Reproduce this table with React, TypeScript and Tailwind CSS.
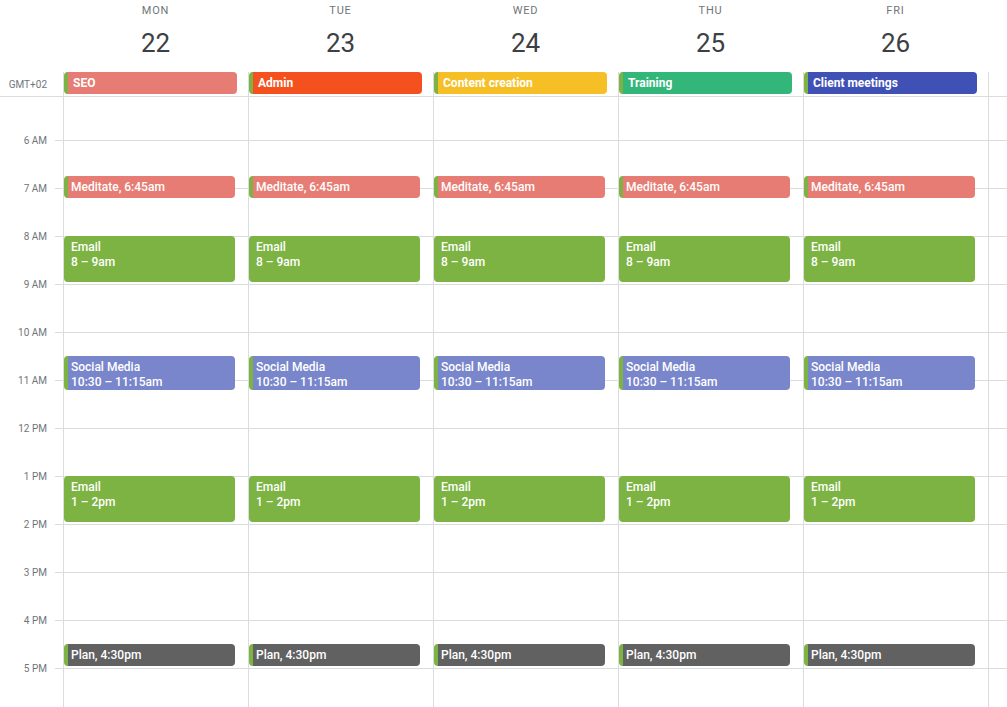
const days = [
  { name: 'MON', date: 22, allDay: 'SEO', color: 'bg-[#e67c73]' },
  { name: 'TUE', date: 23, allDay: 'Admin', color: 'bg-[#f4511e]' },
  { name: 'WED', date: 24, allDay: 'Content creation', color: 'bg-[#f6bf26]' },
  { name: 'THU', date: 25, allDay: 'Training', color: 'bg-[#33b679]' },
  { name: 'FRI', date: 26, allDay: 'Client meetings', color: 'bg-[#3f51b5]' },
];

const hours = ['6 AM', '7 AM', '8 AM', '9 AM', '10 AM', '11 AM', '12 PM', '1 PM', '2 PM', '3 PM', '4 PM', '5 PM'];

type CalEvent = { title: string; time?: string; start: number; dur: number; color: string };

const events: CalEvent[] = [
  { title: 'Meditate, 6:45am', start: 6.75, dur: 0.25, color: 'bg-[#e67c73]' },
  { title: 'Email', time: '8 – 9am', start: 8, dur: 1, color: 'bg-[#7cb342]' },
  { title: 'Social Media', time: '10:30 – 11:15am', start: 10.5, dur: 0.75, color: 'bg-[#7986cb]' },
  { title: 'Email', time: '1 – 2pm', start: 13, dur: 1, color: 'bg-[#7cb342]' },
  { title: 'Plan, 4:30pm', start: 16.5, dur: 0.25, color: 'bg-[#616161]' },
];

function HourCells() {
  return (
    <>
      <div className="h-[43px] shrink-0" />
      {hours.map((h) => (
        <div key={h} className="h-12 shrink-0 border-t border-[#dadce0]" />
      ))}
    </>
  );
}

function DayColumn() {
  return (
    <div className="relative flex w-[185px] shrink-0 flex-col border-l border-[#dadce0]">
      <HourCells />
      {events.map((e, i) => (
        <div
          key={i}
          className={`absolute left-0 w-[171px] overflow-hidden rounded-[4px] border-l-4 border-[#7cb342] pl-[3px] pt-[4px] text-[12px] leading-[15px] font-medium text-white ${e.color}`}
          style={{ top: 43 + (e.start - 6) * 48, height: Math.max(e.dur * 48 - 2, 22) }}
        >
          <div className="truncate">{e.title}</div>
          {e.time && <div className="truncate">{e.time}</div>}
        </div>
      ))}
    </div>
  );
}

export default function App() {
  return (
    <div className="h-[707px] w-[1007px] overflow-hidden bg-white font-['Roboto',sans-serif]">
      {/* header */}
      <div className="border-b border-[#dadce0]">
        <div className="flex h-[72px]">
          <div className="w-[63px] shrink-0" />
          {days.map((d) => (
            <div key={d.name} className="flex w-[185px] shrink-0 flex-col items-center">
              <div className="pt-[3px] text-[11px] leading-4 tracking-[0.8px] text-[#70757a]">{d.name}</div>
              <div className="mt-[6px] text-[26px] leading-9 text-[#3c4043]">{d.date}</div>
            </div>
          ))}
        </div>
        <div className="flex h-6">
          <div className="flex w-[63px] shrink-0 items-center justify-end pr-4 text-[10px] text-[#70757a]">GMT+02</div>
          {days.map((d) => (
            <div key={d.name} className="w-[185px] shrink-0 border-l border-[#dadce0]">
              <div
                className={`flex h-[22px] w-[173px] items-center rounded-[4px] border-l-4 border-[#7cb342] pl-[5px] text-[12px] font-bold text-white ${d.color}`}
              >
                {d.allDay}
              </div>
            </div>
          ))}
          <div className="flex-1 border-l border-[#dadce0]" />
        </div>
      </div>
      {/* body */}
      <div className="flex h-[610px] overflow-hidden">
        <div className="flex w-[63px] shrink-0 flex-col">
          <div className="h-[43px] shrink-0" />
          {hours.map((h) => (
            <div key={h} className="flex h-12 shrink-0">
              <div className="-mt-[6px] h-[14px] w-[55px] pr-2 text-right text-[10px] leading-[14px] text-[#70757a]">{h}</div>
              <div className="w-2 border-t border-[#dadce0]" />
            </div>
          ))}
        </div>
        {days.map((d) => (
          <DayColumn key={d.name} />
        ))}
        <div className="flex flex-1 flex-col border-l border-[#dadce0]">
          <HourCells />
        </div>
      </div>
    </div>
  );
}
